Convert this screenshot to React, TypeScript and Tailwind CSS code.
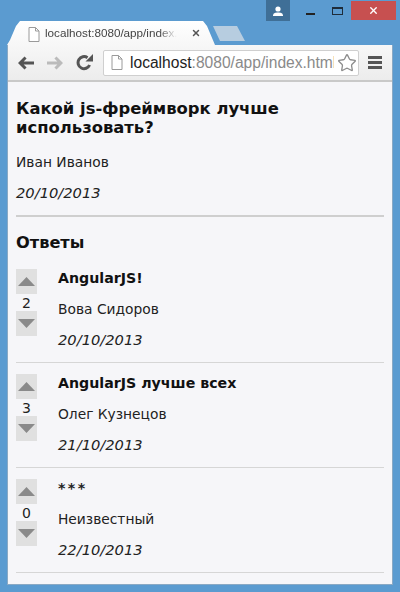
import { Star, X } from "lucide-react";

const answers = [
  { votes: 2, title: "AngularJS!", author: "Вова Сидоров", date: "20/10/2013" },
  { votes: 3, title: "AngularJS лучше всех", author: "Олег Кузнецов", date: "21/10/2013" },
  { votes: 0, title: "***", author: "Неизвестный", date: "22/10/2013" },
];

function PageIcon({ className }: { className: string }) {
  return (
    <svg viewBox="0 0 12 15" className={className} fill="#fff" stroke="#9a9a9a" strokeWidth="1">
      <path d="M1 .5h6.5L11 4v10.5H1z" />
      <path d="M7.5.5V4H11" fill="none" />
    </svg>
  );
}

function NavArrow({ className, flip }: { className: string; flip?: boolean }) {
  return (
    <svg viewBox="0 0 16 14" className={`h-[14px] w-[16px] shrink-0 ${className}`} fill="currentColor">
      <path
        transform={flip ? "matrix(-1 0 0 1 16 0)" : undefined}
        d="M0 7L6.5 .5 8.6 2.6 5.7 5.5H16v3H5.7l2.9 2.9-2.1 2.1z"
      />
    </svg>
  );
}

function VoteButton({ up }: { up?: boolean }) {
  return (
    <div className="flex h-[25px] w-[21px] items-center justify-center bg-[#e0e0e0]">
      <svg viewBox="0 0 17 9" className="h-[9px] w-[17px]" fill="#8a8a8a">
        <path d={up ? "M8.5 0L17 9H0z" : "M0 0h17L8.5 9z"} />
      </svg>
    </div>
  );
}

function Answer({ votes, title, author, date }: (typeof answers)[number]) {
  return (
    <div className="flex h-[105px] border-b border-[#d6d6d6] pt-[11px]">
      <div className="flex w-[42px] shrink-0 flex-col">
        <VoteButton up />
        <div className="flex h-[17px] w-[21px] items-center justify-center text-[14px] leading-none text-[#222]">
          {votes}
        </div>
        <VoteButton />
      </div>
      <div className="-mt-px flex flex-col">
        <div
          className={
            title === "***"
              ? "h-[31px] text-[14.2px] leading-[20px] font-bold tracking-[2.4px] text-[#222]"
              : "h-[31px] text-[14.2px] leading-[20px] font-bold text-[#111]"
          }
        >
          {title}
        </div>
        <div className="h-[31px] text-[13.8px] leading-[20px] text-[#222]">{author}</div>
        <div className="text-[14.7px] leading-[20px] text-[#222] italic">{date}</div>
      </div>
    </div>
  );
}

export default function App() {
  return (
    <div className="flex h-[592px] w-[400px] flex-col overflow-hidden bg-[#5b9bd0] font-['DejaVu_Sans',sans-serif]">
      {/* window buttons */}
      <div className="flex h-[21px] shrink-0 items-start">
        <div className="ml-[266px] flex h-[21px] w-[24px] items-center justify-center bg-[#3f6f97]">
          <svg viewBox="0 0 12 10" className="h-[10px] w-[12px]" fill="#fff">
            <circle cx="6" cy="3" r="2.6" />
            <path d="M1 10c0-3 2-3.5 5-3.5s5 .5 5 3.5z" />
          </svg>
        </div>
        <div className="mt-[13px] ml-[16px] h-[2px] w-[9px] bg-[#222]" />
        <div className="mt-[7px] ml-[17px] h-[8px] w-[11px] border border-t-2 border-[#1e2c3a]" />
        <div className="mt-px ml-[8px] flex h-[19px] w-[45px] items-center justify-center bg-[#c75050]">
          <X size={11} strokeWidth={3} className="text-white" />
        </div>
      </div>

      {/* tab strip */}
      <div className="flex h-[24px] shrink-0 items-end pl-[7px]">
        <div className="relative z-10 flex h-[24px] w-[208px] items-center bg-gradient-to-b from-white to-[#f7f7f7] pl-[21px] [clip-path:polygon(0_100%,3px_19px,9px_5px,13px_0,196px_0,200px_5px,100%_100%)]">
          <PageIcon className="mt-[2px] h-[15px] w-[12px] shrink-0" />
          <span className="ml-[5px] w-[136px] overflow-hidden font-['Liberation_Sans',sans-serif] text-[11.7px] whitespace-nowrap text-[#444] [mask-image:linear-gradient(to_right,black_84%,transparent_97%)]">
            localhost:8080/app/index.html
          </span>
          <X size={10} strokeWidth={3.5} className="ml-[10px] text-[#555]" />
        </div>
        <div className="mb-[4px] h-[15px] w-[32px] -translate-x-[2px] bg-[#b7cde0] [clip-path:polygon(0_0,24px_0,100%_100%,7px_100%)]" />
      </div>

      {/* browser window */}
      <div className="mx-[7px] mb-[7px] flex min-h-0 flex-1 flex-col border-x border-b border-[#8aa9c4]">
        <div className="flex h-[37px] shrink-0 items-center border-b-2 border-[#c9c9c9] bg-gradient-to-b from-[#f7f7f7] to-[#ececec]">
          <NavArrow className="ml-[10px] text-[#555]" />
          <NavArrow flip className="ml-[13px] text-[#bbb]" />
          <svg viewBox="0 0 17 17" className="ml-[13px] h-[17px] w-[17px] shrink-0">
            <path d="M13.6 11A6 6 0 1 1 11.5 3.7" fill="none" stroke="#555" strokeWidth="3" />
            <path d="M9.5 7.5H17V0z" fill="#555" />
          </svg>
          <div className="ml-[10px] flex h-[26px] w-[256px] items-center overflow-hidden rounded-[2px] border border-[#cfcfcf] bg-white pl-[7px]">
            <PageIcon className="h-[15px] w-[12px] shrink-0" />
            <span className="ml-[7px] flex-1 overflow-hidden font-['Liberation_Sans',sans-serif] text-[15.6px] whitespace-nowrap text-[#8a8a8a]">
              <span className="text-[#222]">localhost</span>:8080/app/index.html
            </span>
            <Star size={20} strokeWidth={1.6} className="mr-px ml-[3px] shrink-0 text-[#8d8d8d]" />
          </div>
          <div className="ml-[9px] flex flex-col gap-[2px]">
            <div className="h-[3px] w-[14px] bg-[#555]" />
            <div className="h-[3px] w-[14px] bg-[#555]" />
            <div className="h-[3px] w-[14px] bg-[#555]" />
          </div>
        </div>

        {/* page */}
        <div className="min-h-0 flex-1 bg-[#f6f6f9] pt-[17px] pr-[8px] pl-[8px]">
          <h1 className="text-[16.4px] leading-[19px] font-bold text-[#111]">Какой js-фреймворк лучше использовать?</h1>
          <div className="mt-[15px] text-[13.8px] leading-[20px] text-[#222]">Иван Иванов</div>
          <div className="mt-[11px] border-b-2 border-[#cfcfcf] pb-[12px] text-[14.7px] leading-[20px] text-[#222] italic">
            20/10/2013
          </div>
          <h2 className="mt-[16px] mb-[5px] text-[16.2px] leading-[20px] font-bold text-[#111]">Ответы</h2>
          {answers.map((a) => (
            <Answer key={a.title} {...a} />
          ))}
        </div>
      </div>
    </div>
  );
}
